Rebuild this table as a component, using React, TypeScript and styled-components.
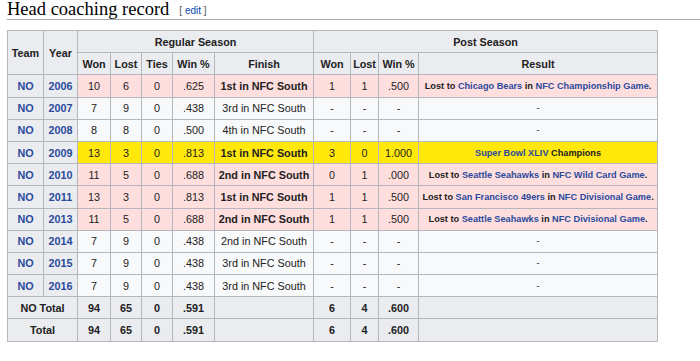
import type { ReactNode } from 'react';
import { createGlobalStyle, styled } from 'styled-components';

const GlobalStyle = createGlobalStyle`
  body {
    margin: 0;
    background: #ffffff;
  }
`;

const Link = styled.span`
  color: #2a4b9d;
`;

type Tone = 'pink' | 'gold';

type Season = {
  year: string;
  won: number;
  lost: number;
  ties: number;
  pct: string;
  finish: string;
  bold?: boolean;
  tone?: Tone;
  pWon: string;
  pLost: string;
  pPct: string;
  result: ReactNode;
};

const seasons: Season[] = [
  {
    year: '2006', won: 10, lost: 6, ties: 0, pct: '.625', finish: '1st in NFC South', bold: true, tone: 'pink',
    pWon: '1', pLost: '1', pPct: '.500',
    result: <>Lost to <Link>Chicago Bears</Link> in <Link>NFC Championship Game</Link>.</>,
  },
  { year: '2007', won: 7, lost: 9, ties: 0, pct: '.438', finish: '3rd in NFC South', pWon: '-', pLost: '-', pPct: '-', result: '-' },
  { year: '2008', won: 8, lost: 8, ties: 0, pct: '.500', finish: '4th in NFC South', pWon: '-', pLost: '-', pPct: '-', result: '-' },
  {
    year: '2009', won: 13, lost: 3, ties: 0, pct: '.813', finish: '1st in NFC South', bold: true, tone: 'gold',
    pWon: '3', pLost: '0', pPct: '1.000',
    result: <><Link>Super Bowl XLIV</Link> Champions</>,
  },
  {
    year: '2010', won: 11, lost: 5, ties: 0, pct: '.688', finish: '2nd in NFC South', bold: true, tone: 'pink',
    pWon: '0', pLost: '1', pPct: '.000',
    result: <>Lost to <Link>Seattle Seahawks</Link> in <Link>NFC Wild Card Game</Link>.</>,
  },
  {
    year: '2011', won: 13, lost: 3, ties: 0, pct: '.813', finish: '1st in NFC South', bold: true, tone: 'pink',
    pWon: '1', pLost: '1', pPct: '.500',
    result: <>Lost to <Link>San Francisco 49ers</Link> in <Link>NFC Divisional Game</Link>.</>,
  },
  {
    year: '2013', won: 11, lost: 5, ties: 0, pct: '.688', finish: '2nd in NFC South', bold: true, tone: 'pink',
    pWon: '1', pLost: '1', pPct: '.500',
    result: <>Lost to <Link>Seattle Seahawks</Link> in <Link>NFC Divisional Game</Link>.</>,
  },
  { year: '2014', won: 7, lost: 9, ties: 0, pct: '.438', finish: '2nd in NFC South', pWon: '-', pLost: '-', pPct: '-', result: '-' },
  { year: '2015', won: 7, lost: 9, ties: 0, pct: '.438', finish: '3rd in NFC South', pWon: '-', pLost: '-', pPct: '-', result: '-' },
  { year: '2016', won: 7, lost: 9, ties: 0, pct: '.438', finish: '3rd in NFC South', pWon: '-', pLost: '-', pPct: '-', result: '-' },
];

const colWidths = [36, 34, 33, 31, 31, 42, 99, 37, 28, 40, 239];

const App = () => {
  return (
    <StPage>
      <GlobalStyle />
      <StHeading>
        Head coaching record
        <StEdit>
          [ <StEditLink>edit</StEditLink> ]
        </StEdit>
      </StHeading>
      <StTable>
        <colgroup>
          {colWidths.map((w, i) => (
            <col key={i} style={{ width: w }} />
          ))}
        </colgroup>
        <thead>
          <tr>
            <StTh rowSpan={2}>Team</StTh>
            <StTh rowSpan={2}>Year</StTh>
            <StTh colSpan={5}>Regular Season</StTh>
            <StTh colSpan={4}>Post Season</StTh>
          </tr>
          <tr>
            <StTh>Won</StTh>
            <StTh>Lost</StTh>
            <StTh>Ties</StTh>
            <StTh>Win %</StTh>
            <StTh>Finish</StTh>
            <StTh>Won</StTh>
            <StTh>Lost</StTh>
            <StTh>Win %</StTh>
            <StTh>Result</StTh>
          </tr>
        </thead>
        <tbody>
          {seasons.map((s) => (
            <tr key={s.year}>
              <StTh><Link>NO</Link></StTh>
              <StTh><Link>{s.year}</Link></StTh>
              <StTd $tone={s.tone}>{s.won}</StTd>
              <StTd $tone={s.tone}>{s.lost}</StTd>
              <StTd $tone={s.tone}>{s.ties}</StTd>
              <StTd $tone={s.tone}>{s.pct}</StTd>
              <StTd $tone={s.tone} $bold={s.bold}>{s.finish}</StTd>
              <StTd $tone={s.tone}>{s.pWon}</StTd>
              <StTd $tone={s.tone}>{s.pLost}</StTd>
              <StTd $tone={s.tone}>{s.pPct}</StTd>
              <StResult $tone={s.tone} $bold={s.result !== '-'}>{s.result}</StResult>
            </tr>
          ))}
          {['NO Total', 'Total'].map((label) => (
            <tr key={label}>
              <StTh colSpan={2}>{label}</StTh>
              <StTh>94</StTh>
              <StTh>65</StTh>
              <StTh>0</StTh>
              <StTh>.591</StTh>
              <StTh />
              <StTh>6</StTh>
              <StTh>4</StTh>
              <StTh>.600</StTh>
              <StTh />
            </tr>
          ))}
        </tbody>
      </StTable>
    </StPage>
  );
};

const StPage = styled.div`
  padding: 0 0 0 7px;
  font-family: 'Liberation Sans', Arial, sans-serif;
  color: #222222;
`;

const StHeading = styled.h2`
  margin: 0;
  padding: 0;
  height: 19px;
  font-family: 'Liberation Serif', 'Times New Roman', serif;
  font-weight: normal;
  font-size: 18.5px;
  line-height: 18px;
  color: #000000;
  border-bottom: 1px solid #a2a9b1;
`;

const StEdit = styled.span`
  margin-left: 10px;
  font-family: 'Liberation Sans', Arial, sans-serif;
  font-size: 10px;
  color: #54595d;
  vertical-align: 1px;
`;

const StEditLink = styled.span`
  color: #0645ad;
`;

const StTable = styled.table`
  margin-top: 10px;
  width: 650px;
  border-collapse: collapse;
  table-layout: fixed;
  background: #f8f9fa;
  border: 1px solid #b4b8be;
  font-size: 10.8px;
  color: #222222;
`;

const StTh = styled.th`
  height: 21.2px;
  padding: 0 2px;
  background: #eaecf0;
  border: 1px solid #b4b8be;
  font-weight: bold;
  text-align: center;
  white-space: nowrap;
`;

const toneColor: Record<Tone, string> = {
  pink: '#ffdede',
  gold: '#ffe80a',
};

const StTd = styled.td<{ $tone?: Tone; $bold?: boolean }>`
  height: 21.2px;
  padding: 0 2px;
  border: 1px solid #b4b8be;
  background: ${({ $tone }) => ($tone ? toneColor[$tone] : '#f8f9fa')};
  font-weight: ${({ $bold }) => ($bold ? 'bold' : 'normal')};
  text-align: center;
  white-space: nowrap;
`;

const StResult = styled(StTd)`
  font-size: 9.2px;
`;

export default App;
